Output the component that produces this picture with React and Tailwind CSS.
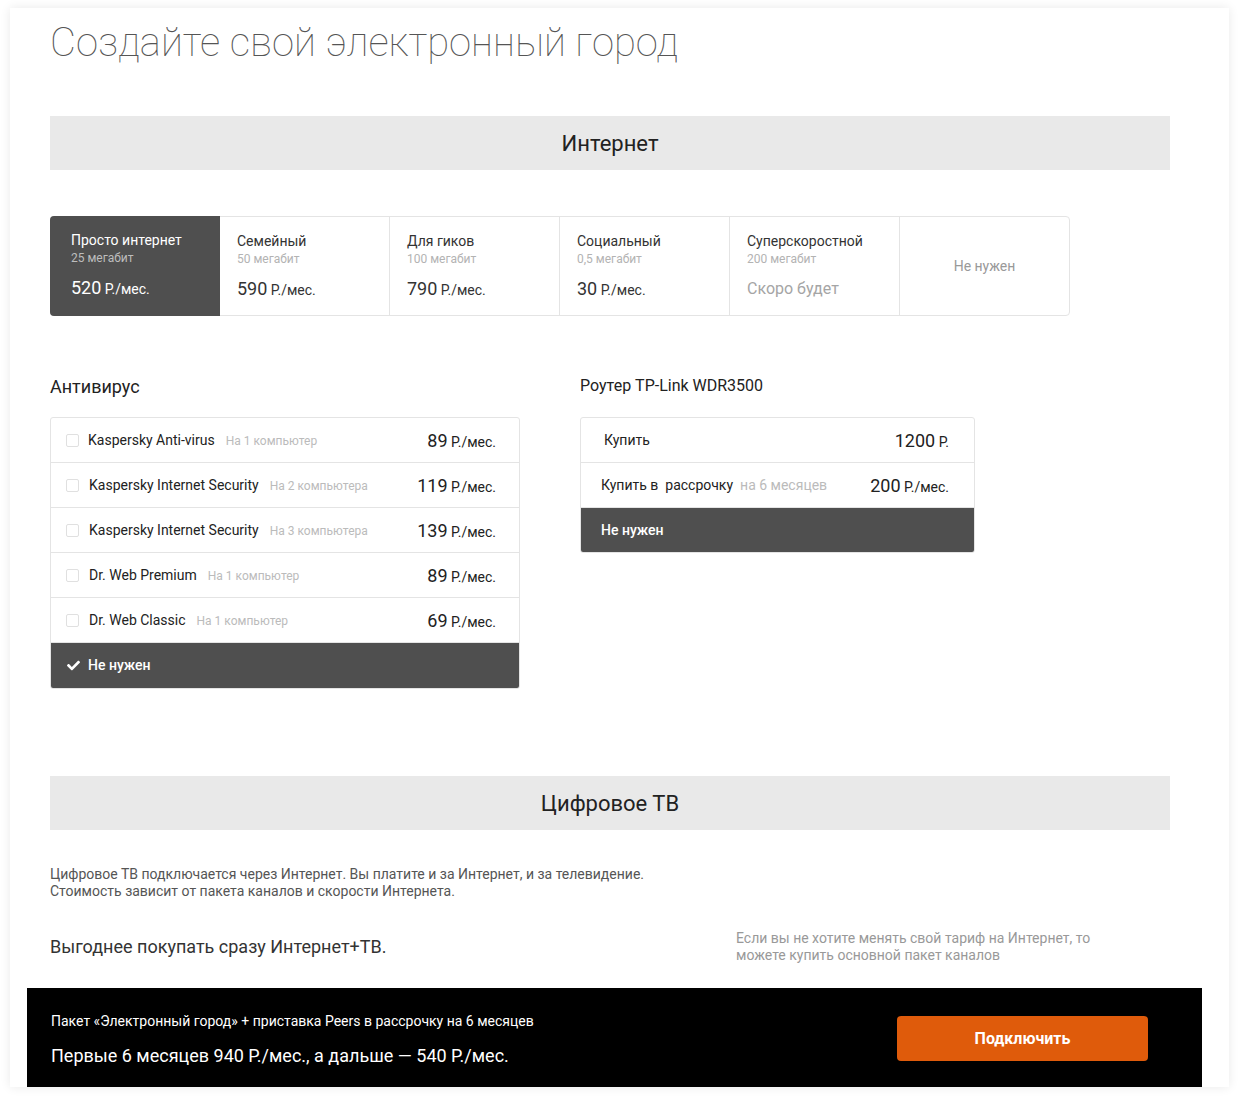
import { FaCheck } from 'react-icons/fa';

const tariffs = [
  { name: 'Просто интернет', speed: '25 мегабит', price: '520', active: true },
  { name: 'Семейный', speed: '50 мегабит', price: '590' },
  { name: 'Для гиков', speed: '100 мегабит', price: '790' },
  { name: 'Социальный', speed: '0,5 мегабит', price: '30' },
  { name: 'Суперскоростной', speed: '200 мегабит', soon: true },
];

const antiviruses = [
  { name: 'Kaspersky Anti-virus', note: 'На 1 компьютер', price: '89' },
  { name: 'Kaspersky Internet Security', note: 'На 2 компьютера', price: '119' },
  { name: 'Kaspersky Internet Security', note: 'На 3 компьютера', price: '139' },
  { name: 'Dr. Web Premium', note: 'На 1 компьютер', price: '89' },
  { name: 'Dr. Web Classic', note: 'На 1 компьютер', price: '69' },
];

const Price = ({ value, unit = 'Р./мес.' }) => (
  <span className="whitespace-nowrap">
    <span className="text-[18px]">{value}</span>
    <span className="text-[14px]"> {unit}</span>
  </span>
);

const App = () => {
  return (
    <div className="min-h-screen bg-white px-[10px] pt-[8px] pb-[12px] font-['Roboto',sans-serif] text-[#333]">
      <div className="bg-white shadow-[0_0_10px_rgba(0,0,0,0.09)]">
        <div className="pl-10 pr-[59px] pt-[7px]">
          {/* Title */}
          <h1 className="text-[40px] leading-[56px] font-thin text-[#555]">
            Создайте свой электронный город
          </h1>

          {/* Internet */}
          <div className="mt-[45px] h-[54px] bg-[#e9e9e9] flex items-center justify-center">
            <h2 className="text-[22px] text-[#222]">Интернет</h2>
          </div>

          <div className="mt-[46px] w-[1020px] h-[100px] flex border border-[#e4e4e4] rounded-[4px]">
            {tariffs.map((t, i) => (
              <div
                key={i}
                className={`w-[170px] shrink-0 pt-[14px] ${
                  t.active
                    ? 'bg-[#4f4f4f] text-white rounded-l-[4px] pl-[21px] -ml-px -my-px h-[100px]'
                    : 'border-r border-[#e4e4e4] pl-[17px]'
                }`}
              >
                <div className="text-[14px] leading-[20px]">{t.name}</div>
                <div className={`text-[12px] leading-[16px] ${t.active ? 'text-[#bdbdbd]' : 'text-[#b3b3b3]'}`}>
                  {t.speed}
                </div>
                <div className="mt-[10px] leading-[24px]">
                  {t.soon ? (
                    <span className="text-[16px] text-[#a5a5a5]">Скоро будет</span>
                  ) : (
                    <Price value={t.price} />
                  )}
                </div>
              </div>
            ))}
            <div className="flex-1 flex items-center justify-center text-[14px] text-[#999]">Не нужен</div>
          </div>

          {/* Antivirus + Router */}
          <div className="mt-[59px] flex gap-[60px] items-start">
            <div className="w-[470px]">
              <h3 className="text-[18px] leading-[24px] text-[#222]">Антивирус</h3>
              <div className="mt-[18px] border border-[#e4e4e4] rounded-[3px] overflow-hidden">
                {antiviruses.map((a, i) => (
                  <div key={i} className="h-[45px] pt-px border-b border-[#e4e4e4] flex items-center pl-[15px] pr-[23px]">
                    <span className="w-[13px] h-[13px] border border-[#e0e0e0] rounded-[2px] shrink-0" />
                    <span className={`${i === 0 ? 'ml-[9px]' : 'ml-[10px]'} text-[14px] text-[#222]`}>{a.name}</span>
                    <span className="ml-[11px] text-[12px] text-[#bbb]">{a.note}</span>
                    <span className="ml-auto text-[#222]">
                      <Price value={a.price} />
                    </span>
                  </div>
                ))}
                <div className="h-[45px] bg-[#4f4f4f] flex items-center pl-[16px] text-white">
                  <FaCheck className="w-[13px] h-[13px]" />
                  <span className="ml-[8px] text-[14px] font-medium">Не нужен</span>
                </div>
              </div>
            </div>

            <div className="w-[395px]">
              <h3 className="text-[16px] leading-[22px] text-[#222]">Роутер TP-Link WDR3500</h3>
              <div className="mt-[20px] border border-[#e4e4e4] rounded-[3px] overflow-hidden">
                <div className="h-[45px] border-b border-[#e4e4e4] flex items-center pl-[23px] pr-[25px]">
                  <span className="text-[14px] text-[#222]">Купить</span>
                  <span className="ml-auto text-[#222]">
                    <Price value="1200" unit="Р." />
                  </span>
                </div>
                <div className="h-[45px] border-b border-[#e4e4e4] flex items-center pl-[20px] pr-[25px]">
                  <span className="text-[14px] text-[#222] whitespace-pre">Купить в  рассрочку</span>
                  <span className="ml-[7px] text-[14px] text-[#bbb]">на 6 месяцев</span>
                  <span className="ml-auto text-[#222]">
                    <Price value="200" />
                  </span>
                </div>
                <div className="h-[44px] bg-[#4f4f4f] flex items-center pl-[20px] text-white">
                  <span className="text-[14px] font-medium">Не нужен</span>
                </div>
              </div>
            </div>
          </div>

          {/* Digital TV */}
          <div className="mt-[87px] h-[54px] bg-[#e9e9e9] flex items-center justify-center">
            <h2 className="text-[22px] text-[#222]">Цифровое ТВ</h2>
          </div>

          <p className="mt-[36px] text-[14px] leading-[17px] text-[#555]">
            Цифровое ТВ подключается через Интернет. Вы платите и за Интернет, и за телевидение.
            <br />
            Стоимость зависит от пакета каналов и скорости Интернета.
          </p>

          <div className="mt-[30px] flex items-center">
            <div className="w-[686px] text-[18px] leading-[24px] text-[#333]">Выгоднее покупать сразу Интернет+ТВ.</div>
            <div className="text-[14px] leading-[17px] text-[#999]">
              Если вы не хотите менять свой тариф на Интернет, то
              <br />
              можете купить основной пакет каналов
            </div>
          </div>
        </div>

        {/* Bottom bar */}
        <div className="mt-[24px] ml-[17px] mr-[27px] h-[99px] bg-black flex items-center pl-[24px] pr-[54px]">
          <div className="flex-1 text-white pt-[5px]">
            <div className="text-[14px] leading-[17px]">
              Пакет «Электронный город» + приставка Peers в рассрочку на 6 месяцев
            </div>
            <div className="mt-[14px] text-[18px] leading-[24px]">
              Первые 6 месяцев 940 Р./мес., а дальше — 540 Р./мес.
            </div>
          </div>
          <button className="w-[251px] h-[45px] mt-[2px] rounded-[4px] bg-[#df5b0b] text-white text-[16px] font-bold">
            Подключить
          </button>
        </div>
      </div>
    </div>
  );
};

export default App;
